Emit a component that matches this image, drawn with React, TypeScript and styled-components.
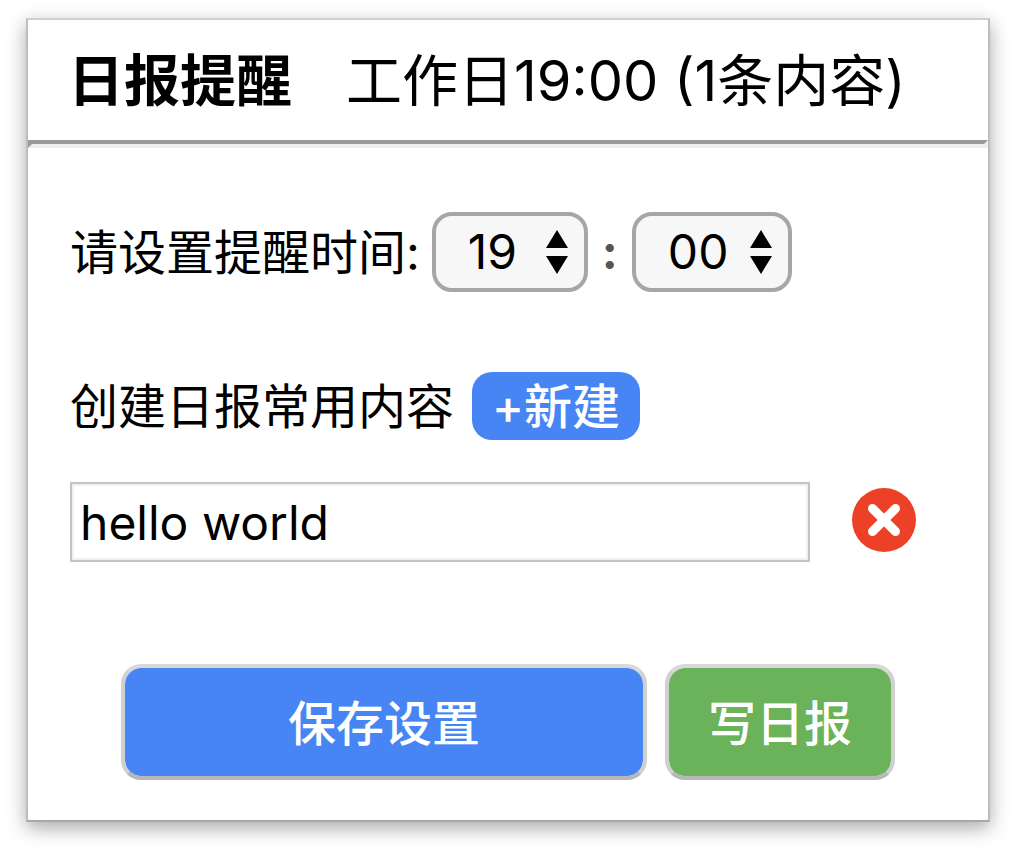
import React, { useState } from "react";
import styled, { createGlobalStyle } from "styled-components";

const GlobalStyle = createGlobalStyle`
  *, *::before, *::after { box-sizing: border-box; }
  body {
    margin: 0;
    background: #fff;
    color: #000;
    font-family: Inter, "Noto Sans CJK SC", sans-serif;
    font-size: 48px;
    line-height: 68px;
  }
  button, input, select { font: inherit; color: inherit; margin: 0; }
`;

const Page = styled.main`
  padding: 18px 26px 34px;
`;

const Card = styled.section`
  border: 2px solid;
  border-color: #cfcfcf #bdbdbd #a8a8a8;
  background: #fff;
  box-shadow: 0 6px 18px rgba(0, 0, 0, 0.34);
`;

const Header = styled.header`
  display: flex;
  align-items: center;
  gap: 54px;
  height: 120px;
  padding: 2px 40px 0;
  font-size: 56px;
  white-space: nowrap;
`;

const Title = styled.h1`
  margin: 0;
  font-size: 56px;
  font-weight: 700;
`;

const Divider = styled.hr`
  margin: 0;
  border: 4px solid;
  border-color: #9a9a9a #eeeeee #eeeeee #9a9a9a;
`;

const Form = styled.form`
  padding: 64px 72px 40px 42px;
`;

const TimeRow = styled.div`
  display: flex;
  align-items: center;
  height: 80px;
  white-space: nowrap;
`;

const Label = styled.span<{ $gap: number }>`
  margin-right: ${(p) => p.$gap}px;
  padding-top: 2px;
`;

const Colon = styled.span`
  width: 44px;
  text-align: center;
  color: #555;
  font-weight: 700;
`;

const SelectBox = styled.span<{ $width: number }>`
  position: relative;
  display: flex;
  width: ${(p) => p.$width}px;
  height: 80px;
`;

const Select = styled.select`
  appearance: none;
  width: 100%;
  height: 100%;
  padding: 0 0 0 32px;
  border: 4px solid #a6a6a6;
  border-radius: 20px;
  background: #f7f7f7;
  line-height: 68px;
`;

const Arrows = styled.svg`
  position: absolute;
  top: 18px;
  right: 20px;
  width: 22px;
  height: 44px;
  pointer-events: none;
`;

const CreateRow = styled.div`
  display: flex;
  align-items: center;
  height: 68px;
  margin-top: 80px;
  white-space: nowrap;
`;

const NewButton = styled.button`
  display: flex;
  align-items: center;
  justify-content: center;
  width: 168px;
  height: 68px;
  padding: 2px 0 0;
  border: 0;
  border-radius: 20px;
  background: #4785f4;
  color: #fff;
  font-weight: 500;
`;

const ItemRow = styled.div`
  display: flex;
  align-items: flex-start;
  gap: 42px;
  margin-top: 42px;
`;

const ItemInput = styled.input`
  flex: 1;
  min-width: 0;
  height: 80px;
  padding: 0 8px;
  border: 2px solid #c4c4c4;
  border-radius: 0;
  background: #fff;
  box-shadow: inset 0 0 0 2px #f0f0f0;
`;

const DeleteButton = styled.button`
  flex: none;
  width: 64px;
  height: 64px;
  margin-top: 6px;
  padding: 0;
  border: 0;
  border-radius: 50%;
  background: none;

  svg { display: block; }
`;

const Footer = styled.footer`
  display: flex;
  gap: 18px;
  margin-top: 102px;
  padding-left: 51px;
  padding-right: 21px;
`;

const ActionButton = styled.button<{ $color: string; $wide?: boolean }>`
  flex: ${(p) => (p.$wide ? "1" : "0 0 230px")};
  height: 116px;
  padding: 4px 0 0;
  border: 4px solid;
  border-color: #d8d8d8 #d0d0d0 #b8b8b8;
  border-radius: 20px;
  background: ${(p) => p.$color};
  background-clip: padding-box;
  color: #fff;
  font-weight: 500;
  white-space: nowrap;
`;

const pad = (n: number) => String(n).padStart(2, "0");

type TimeSelectProps = {
  label: string;
  count: number;
  value: string;
  width: number;
  onChange: (value: string) => void;
};

function TimeSelect({ label, count, value, width, onChange }: TimeSelectProps) {
  return (
    <SelectBox $width={width}>
      <Select aria-label={label} value={value} onChange={(e) => onChange(e.target.value)}>
        {Array.from({ length: count }, (_, n) => (
          <option key={n} value={pad(n)}>{pad(n)}</option>
        ))}
      </Select>
      <Arrows viewBox="0 0 22 44" aria-hidden="true">
        <path d="M11 0 22 18H0ZM0 26h22L11 44Z" fill="#000" />
      </Arrows>
    </SelectBox>
  );
}

export default function App() {
  const [hour, setHour] = useState("19");
  const [minute, setMinute] = useState("00");
  const [items, setItems] = useState(["hello world"]);

  return (
    <>
      <GlobalStyle />
      <Page>
        <Card>
          <Header>
            <Title>日报提醒</Title>
            <span>工作日{hour}:{minute} ({items.length}条内容)</span>
          </Header>
          <Divider />
          <Form onSubmit={(e) => e.preventDefault()}>
            <TimeRow>
              <Label $gap={12}>请设置提醒时间:</Label>
              <TimeSelect label="时" count={24} value={hour} width={156} onChange={setHour} />
              <Colon>:</Colon>
              <TimeSelect label="分" count={60} value={minute} width={160} onChange={setMinute} />
            </TimeRow>
            <CreateRow>
              <Label $gap={18}>创建日报常用内容</Label>
              <NewButton type="button" onClick={() => setItems([...items, ""])}>+新建</NewButton>
            </CreateRow>
            {items.map((item, i) => (
              <ItemRow key={i}>
                <ItemInput
                  type="text"
                  aria-label="日报内容"
                  value={item}
                  onChange={(e) => setItems(items.map((t, j) => (j === i ? e.target.value : t)))}
                />
                <DeleteButton
                  type="button"
                  aria-label="删除"
                  onClick={() => setItems(items.filter((_, j) => j !== i))}
                >
                  <svg width="64" height="64" viewBox="0 0 64 64" aria-hidden="true">
                    <circle cx="32" cy="32" r="32" fill="#ec4126" />
                    <path d="M20.5 20.5l23 23M43.5 20.5l-23 23" stroke="#fff" strokeWidth="9" strokeLinecap="round" />
                  </svg>
                </DeleteButton>
              </ItemRow>
            ))}
            <Footer>
              <ActionButton type="submit" $color="#4785f4" $wide>保存设置</ActionButton>
              <ActionButton type="button" $color="#6ab35a">写日报</ActionButton>
            </Footer>
          </Form>
        </Card>
      </Page>
    </>
  );
}
